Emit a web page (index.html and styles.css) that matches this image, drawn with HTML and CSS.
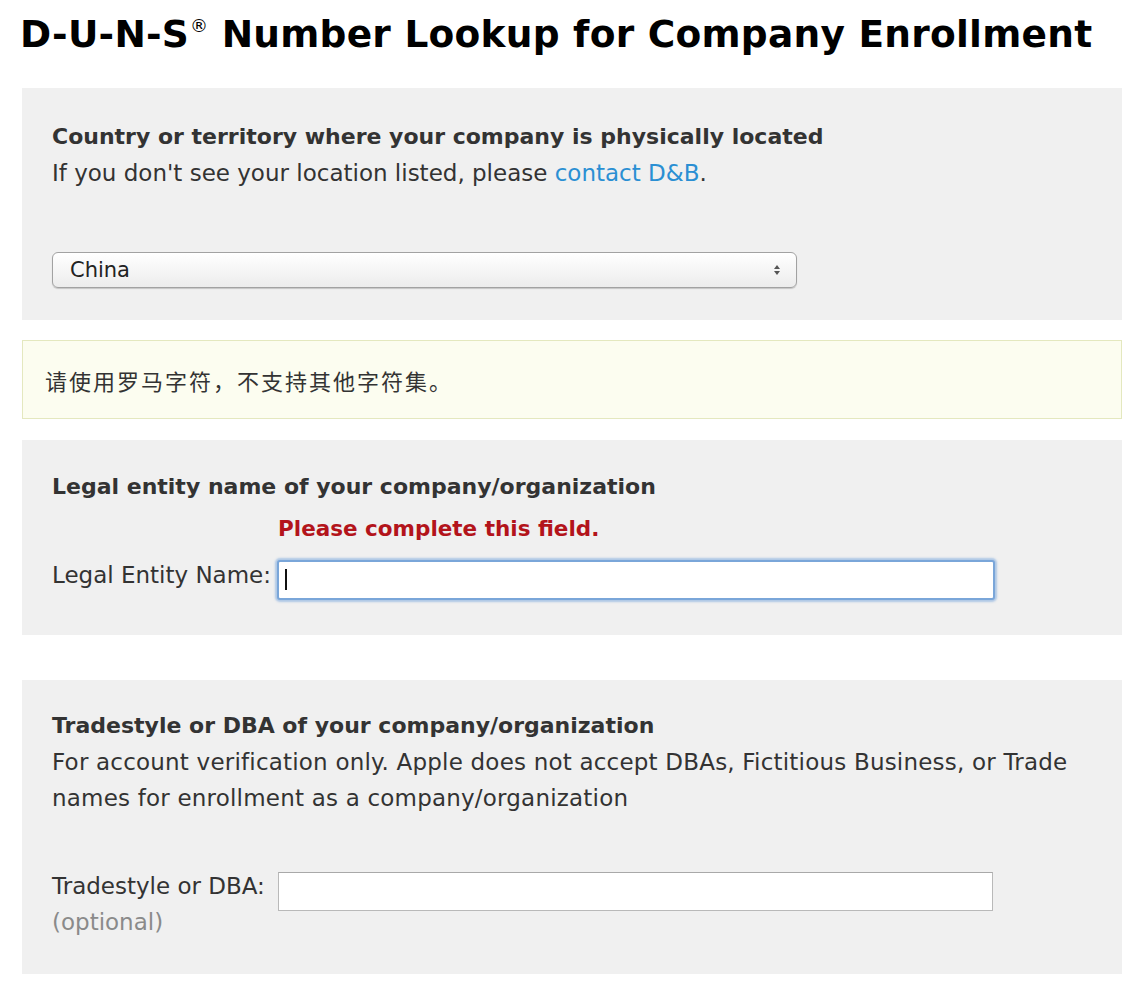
FILE: index.html
```html
<!DOCTYPE html>
<html lang="en">
<head>
<meta charset="utf-8">
<title>D-U-N-S Number Lookup</title>
<link rel="stylesheet" href="styles.css">
</head>
<body>
<div class="page">
  <h1 class="title">D-U-N-S<sup class="reg">®</sup> Number Lookup for Company Enrollment</h1>

  <section class="panel panel-country">
    <div class="heading">Country or territory where your company is physically located</div>
    <div class="text">If you don't see your location listed, please <a class="link" href="#">contact D&amp;B</a>.</div>
    <div class="select">
      <span class="select-value">China</span>
      <span class="select-arrows"><span class="up"></span><span class="down"></span></span>
    </div>
  </section>

  <div class="note">请使用罗马字符，不支持其他字符集。</div>

  <section class="panel panel-legal">
    <div class="heading">Legal entity name of your company/organization</div>
    <div class="error">Please complete this field.</div>
    <div class="row">
      <label class="label">Legal Entity Name:</label>
      <div class="input input-focus"><span class="caret"></span></div>
    </div>
  </section>

  <section class="panel panel-trade">
    <div class="heading">Tradestyle or DBA of your company/organization</div>
    <div class="text text-trade">For account verification only. Apple does not accept DBAs, Fictitious Business, or Trade names for enrollment as a company/organization</div>
    <div class="row row-trade">
      <div class="label-col">
        <label class="label">Tradestyle or DBA:</label>
        <div class="optional">(optional)</div>
      </div>
      <div class="input input-plain"></div>
    </div>
  </section>
</div>
</body>
</html>
```

FILE: styles.css
```css
html, body {
  margin: 0;
  padding: 0;
  background: #ffffff;
}

body {
  font-family: "DejaVu Sans", "Noto Sans CJK SC", sans-serif;
  color: #333333;
}

.page {
  width: 1100px;
  padding: 0 0 0 22px;
}

.title {
  margin: 0 0 0 -2px;
  padding-top: 12px;
  height: 76px;
  box-sizing: border-box;
  font-size: 37.5px;
  font-weight: bold;
  line-height: 44px;
  color: #000000;
  letter-spacing: 0.25px;
  white-space: nowrap;
}

.reg {
  font-size: 18px;
  font-weight: normal;
  vertical-align: 15px;
  line-height: 0;
  margin-left: 1px;
}

.panel {
  background: #f0f0f0;
}

.heading {
  font-size: 22px;
  font-weight: bold;
  line-height: 36px;
  color: #333333;
  white-space: nowrap;
}

.text {
  font-size: 23px;
  line-height: 36px;
  color: #333333;
}

.text-trade {
  letter-spacing: 0.2px;
}

.link {
  color: #2a8fd3;
  text-decoration: none;
}

.panel-country {
  margin-top: 12px;
  padding: 31px 30px 32px 30px;
}

.select {
  margin-top: 61px;
  width: 745px;
  height: 36px;
  box-sizing: border-box;
  border: 1px solid #a2a2a2;
  border-radius: 6px;
  background: linear-gradient(#ffffff, #f4f4f4 60%, #ececec);
  box-shadow: 0 1px 1px rgba(0,0,0,0.18);
  display: flex;
  align-items: center;
  justify-content: space-between;
  padding: 0 16px 0 17px;
}

.select-value {
  font-size: 21px;
  color: #222222;
}

.select-arrows {
  display: flex;
  flex-direction: column;
  gap: 2px;
}

.select-arrows .up {
  width: 0;
  height: 0;
  border-left: 3.5px solid transparent;
  border-right: 3.5px solid transparent;
  border-bottom: 4px solid #555555;
}

.select-arrows .down {
  width: 0;
  height: 0;
  border-left: 3.5px solid transparent;
  border-right: 3.5px solid transparent;
  border-top: 4px solid #555555;
}

.note {
  margin-top: 20px;
  height: 79px;
  box-sizing: border-box;
  background: #fcfdf0;
  border: 1px solid #e4e8bf;
  padding: 22px 22px;
  font-family: "Noto Sans CJK SC", sans-serif;
  font-size: 22px;
  letter-spacing: 2px;
  line-height: 35px;
  color: #333333;
}

.panel-legal {
  margin-top: 21px;
  padding: 29px 30px 35px 30px;
}

.error {
  margin-left: 226px;
  font-size: 21.5px;
  font-weight: bold;
  color: #b3141b;
  line-height: 36px;
  margin-top: 6px;
}

.row {
  display: flex;
  align-items: flex-start;
  margin-top: 13px;
}

.label {
  width: 225px;
  flex: none;
  font-size: 23px;
  line-height: 30px;
  color: #333333;
}

.input {
  height: 40px;
  box-sizing: border-box;
  background: #ffffff;
  position: relative;
}

.input-focus {
  width: 718px;
  border: 2px solid #7aa6d9;
  border-radius: 3px;
  box-shadow: 0 0 2px 2px rgba(120, 165, 220, 0.55);
}

.caret {
  position: absolute;
  left: 6px;
  top: 7px;
  width: 2px;
  height: 21px;
  background: #111111;
}

.panel-trade {
  margin-top: 45px;
  padding: 28px 30px 37px 30px;
}

.row-trade {
  margin-top: 55px;
}

.label-col {
  width: 226px;
  flex: none;
}

.label-col .label {
  display: block;
  line-height: 30px;
}

.optional {
  font-size: 23px;
  line-height: 30px;
  margin-top: 6px;
  color: #8a8a8a;
}

.input-plain {
  width: 715px;
  height: 39px;
  border: 1px solid #b9b9b9;
  border-top-color: #a9a9a9;
  margin-top: 1px;
}
```
